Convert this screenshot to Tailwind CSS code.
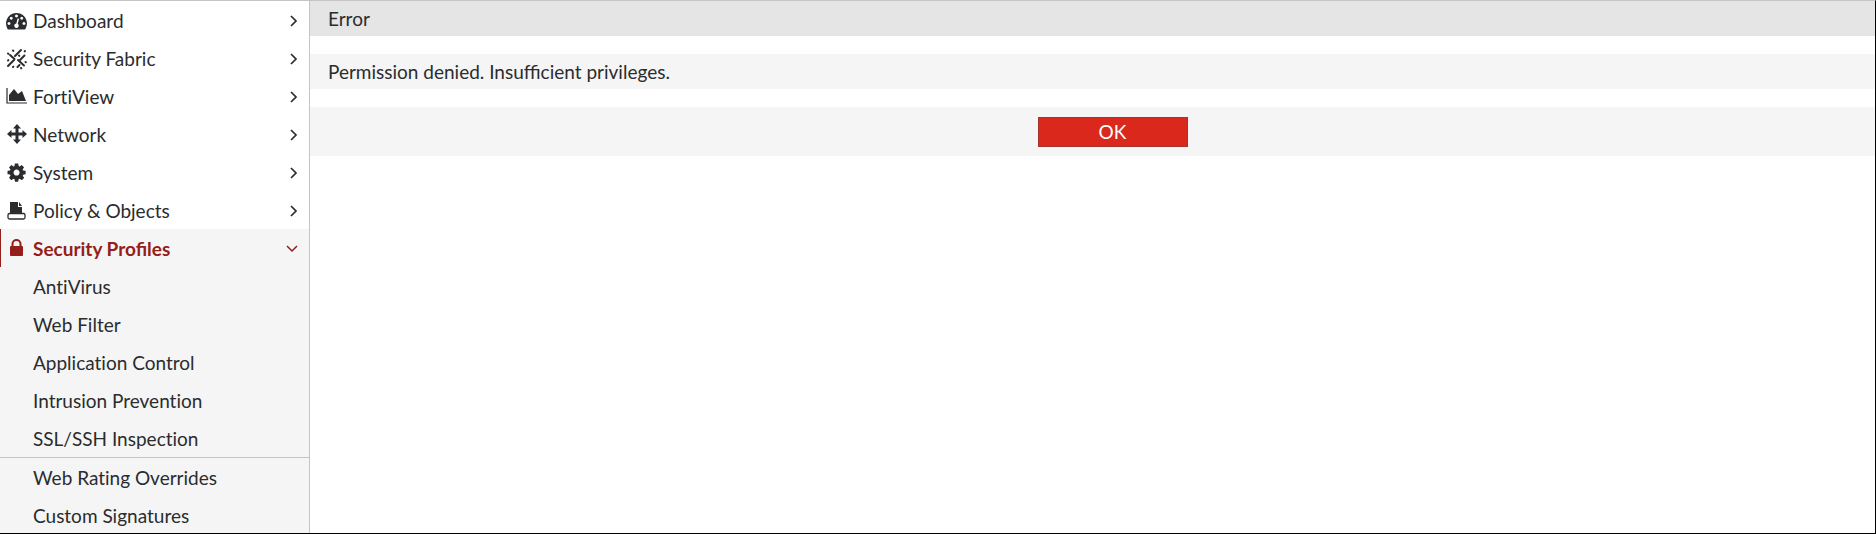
<!DOCTYPE html>
<html lang="en">
<head>
    <meta charset="UTF-8">
    <meta name="viewport" content="width=device-width, initial-scale=1.0">
    <title>FortiGate</title>
    <script src="https://cdn.jsdelivr.net/npm/@tailwindcss/browser@4"></script>
</head>
<body class="bg-white">
    <div class="flex h-screen overflow-hidden border-t border-t-[#c4c4c4] border-r border-r-black border-b border-b-black font-[Lato,sans-serif] text-[19px] leading-6 text-[#2a2c2f]">
        <!-- Sidebar -->
        <nav class="w-[310px] shrink-0 overflow-hidden border-r border-[#c4c4c4] [font-variant-ligatures:none]">
            <ul>
                <li>
                    <a href="#" class="flex h-[38px] items-center gap-[5px] border-l border-transparent pt-0.5 pl-[5px] pr-[11px]">
                        <svg class="size-[22px] shrink-0" viewBox="0 0 22 22" fill="currentColor">
                            <path transform="translate(0 0) scale(.0117)" d="M384 1152q0-53-37.5-90.5t-90.5-37.5-90.5 37.5-37.5 90.5 37.5 90.5 90.5 37.5 90.5-37.5 37.5-90.5zm192-448q0-53-37.5-90.5t-90.5-37.5-90.5 37.5-37.5 90.5 37.5 90.5 90.5 37.5 90.5-37.5 37.5-90.5zm428 481l101-382q6-26-7.5-48.5t-38.5-29.5-48 6.5-30 39.5l-101 382q-60 5-107 43.5t-63 98.5q-20 77 20 146t117 89 146-20 89-117q16-60-6-117t-72-91zm660-33q0-53-37.5-90.5t-90.5-37.5-90.5 37.5-37.5 90.5 37.5 90.5 90.5 37.5 90.5-37.5 37.5-90.5zm-640-640q0-53-37.5-90.5t-90.5-37.5-90.5 37.5-37.5 90.5 37.5 90.5 90.5 37.5 90.5-37.5 37.5-90.5zm448 192q0-53-37.5-90.5t-90.5-37.5-90.5 37.5-37.5 90.5 37.5 90.5 90.5 37.5 90.5-37.5 37.5-90.5zm320 448q0 261-141 483-19 29-54 29h-1402q-35 0-54-29-141-221-141-483 0-182 71-348t191-286 286-191 348-71 348 71 286 191 191 286 71 348z"/>
                        </svg>
                        <span class="grow">Dashboard</span>
                        <svg class="h-3 w-2" viewBox="0 0 8 12" fill="none" stroke="currentColor" stroke-width="1.7"><path d="M1 1l5 5-5 5"/></svg>
                    </a>
                </li>
                <li>
                    <a href="#" class="flex h-[38px] items-center gap-[5px] border-l border-transparent pt-0.5 pl-[5px] pr-[11px]">
                        <svg class="size-[22px] shrink-0" viewBox="0 0 22 22" fill="none" stroke="currentColor" stroke-width="2" stroke-linecap="round">
                            <path d="M15 2L9 8M18.500 7.500l-4.500 4.500M8 12l-6 6M4 7l4.500 4M12 12l6 5.500M13.500 17l-2 2"/>
                            <path d="M7 2.500l.4.400M2 5.500l.4.400M19 3l-.4.400M19.500 14l.3.300M15 20l.3.300M2 12.500l.4-.4M7 19l.4-.4M13 7.500l.4.400"/>
                        </svg>
                        <span class="grow">Security Fabric</span>
                        <svg class="h-3 w-2" viewBox="0 0 8 12" fill="none" stroke="currentColor" stroke-width="1.7"><path d="M1 1l5 5-5 5"/></svg>
                    </a>
                </li>
                <li>
                    <a href="#" class="flex h-[38px] items-center gap-[5px] border-l border-transparent pt-0.5 pl-[5px] pr-[11px]">
                        <svg class="size-[22px] shrink-0" viewBox="0 0 22 22" fill="currentColor">
                            <path d="M3 15V9l5-6 4 5 4-3 4 10z"/>
                            <path fill="none" stroke="currentColor" stroke-width="1.200" d="M1 2v15h20"/>
                        </svg>
                        <span class="grow">FortiView</span>
                        <svg class="h-3 w-2" viewBox="0 0 8 12" fill="none" stroke="currentColor" stroke-width="1.7"><path d="M1 1l5 5-5 5"/></svg>
                    </a>
                </li>
                <li>
                    <a href="#" class="flex h-[38px] items-center gap-[5px] border-l border-transparent pt-0.5 pl-[5px] pr-[11px]">
                        <svg class="size-[22px] shrink-0" viewBox="0 0 22 22" fill="currentColor">
                            <path d="M11 0l4 4.500h-2.500v4H16.500V6l4.500 4-4.500 4v-2.500H12.500v4H15L11 20l-4-4.500h2.500v-4H5.500V14L1 10l4.500-4v2.500h4v-4H7z"/>
                        </svg>
                        <span class="grow">Network</span>
                        <svg class="h-3 w-2" viewBox="0 0 8 12" fill="none" stroke="currentColor" stroke-width="1.7"><path d="M1 1l5 5-5 5"/></svg>
                    </a>
                </li>
                <li>
                    <a href="#" class="flex h-[38px] items-center gap-[5px] border-l border-transparent pt-0.5 pl-[5px] pr-[11px]">
                        <svg class="size-[22px] shrink-0" viewBox="0 0 22 22" fill="currentColor">
                            <path transform="translate(0 0) scale(.0118)" d="M1152 896q0-106-75-181t-181-75-181 75-75 181 75 181 181 75 181-75 75-181zm512-109v222q0 12-8 23t-20 13l-185 28q-19 54-39 91 35 50 107 138 10 12 10 25t-9 23q-27 37-99 108t-94 71q-12 0-26-9l-138-108q-44 23-91 38-16 136-29 186-7 28-36 28h-222q-14 0-24.500-8.500t-11.500-21.500l-28-184q-49-16-90-37l-141 107q-10 9-25 9-14 0-25-11-126-114-165-168-7-10-7-23 0-12 8-23 15-21 51-66.500t54-70.500q-27-50-41-99l-183-27q-13-2-21-12.500t-8-23.500v-222q0-12 8-23t19-13l186-28q14-46 39-92-40-57-107-138-10-12-10-24 0-10 9-23 26-36 98.500-107.500t94.500-71.500q13 0 26 10l138 107q44-23 91-38 16-136 29-186 7-28 36-28h222q14 0 24.500 8.500t11.500 21.500l28 184q49 16 90 37l142-107q9-9 24-9 13 0 25 10 129 119 165 170 7 8 7 22 0 12-8 23-15 21-51 66.500t-54 70.500q26 50 41 98l183 28q13 2 21 12.500t8 23.500z"/>
                        </svg>
                        <span class="grow">System</span>
                        <svg class="h-3 w-2" viewBox="0 0 8 12" fill="none" stroke="currentColor" stroke-width="1.7"><path d="M1 1l5 5-5 5"/></svg>
                    </a>
                </li>
                <li>
                    <a href="#" class="flex h-[38px] items-center gap-[5px] border-l border-transparent pt-0.5 pl-[5px] pr-[11px]">
                        <svg class="size-[22px] shrink-0" viewBox="0 0 22 22" fill="currentColor">
                            <rect x="2" y="13.500" width="17" height="5.500" rx="1.500" fill="white" stroke="currentColor" stroke-width="1.300"/>
                            <path d="M4 2h8v5h4v7H4zM13 2l3 4h-3z"/>
                        </svg>
                        <span class="grow">Policy &amp; Objects</span>
                        <svg class="h-3 w-2" viewBox="0 0 8 12" fill="none" stroke="currentColor" stroke-width="1.7"><path d="M1 1l5 5-5 5"/></svg>
                    </a>
                </li>
                <li class="bg-[#f5f5f5]">
                    <a href="#" class="flex h-[38px] items-center gap-[5px] border-l border-[#941e19] pt-0.5 pl-[5px] pr-[11px] font-bold text-[#941e19] [font-variant-ligatures:normal]">
                        <svg class="size-[22px] shrink-0" viewBox="0 0 22 22" fill="currentColor">
                            <rect x="4" y="8" width="13" height="10" rx="1"/>
                            <path fill="none" stroke="currentColor" stroke-width="2" d="M6.500 9V6a4 4 0 018 0v3"/>
                        </svg>
                        <span class="grow">Security Profiles</span>
                        <svg class="h-2 w-3" viewBox="0 0 12 8" fill="none" stroke="currentColor" stroke-width="1.500"><path d="M1 1l5 5 5-5"/></svg>
                    </a>
                    <ul>
                        <li><a href="#" class="flex h-[38px] items-center pt-0.5 pl-[33px]">AntiVirus</a></li>
                        <li><a href="#" class="flex h-[38px] items-center pt-0.5 pl-[33px]">Web Filter</a></li>
                        <li><a href="#" class="flex h-[38px] items-center pt-0.5 pl-[33px]">Application Control</a></li>
                        <li><a href="#" class="flex h-[38px] items-center pt-0.5 pl-[33px]">Intrusion Prevention</a></li>
                        <li><a href="#" class="flex h-[38px] items-center pt-0.5 pl-[33px]">SSL/SSH Inspection</a></li>
                        <li class="border-t border-[#c4c4c4]"><a href="#" class="flex h-[38px] items-center pt-0.5 pl-[33px]">Web Rating Overrides</a></li>
                        <li><a href="#" class="flex h-[38px] items-center pt-0.5 pl-[33px]">Custom Signatures</a></li>
                    </ul>
                </li>
            </ul>
        </nav>

        <!-- Error message -->
        <main class="flex min-w-0 grow flex-col gap-[18px]">
            <h1 class="h-[35px] bg-[#e5e5e5] px-[18px] py-1.5">Error</h1>
            <p class="h-[35px] bg-[#f5f5f5] px-[18px] py-1.5">Permission denied. Insufficient privileges.</p>
            <div class="flex justify-center bg-[#f5f5f5] pt-2.5 pb-[9px] pl-10">
                <button type="button" class="flex h-[30px] w-[150px] items-center justify-center border border-[#a8322c] bg-[#da291c] text-white">OK</button>
            </div>
        </main>
    </div>
</body>
</html>
